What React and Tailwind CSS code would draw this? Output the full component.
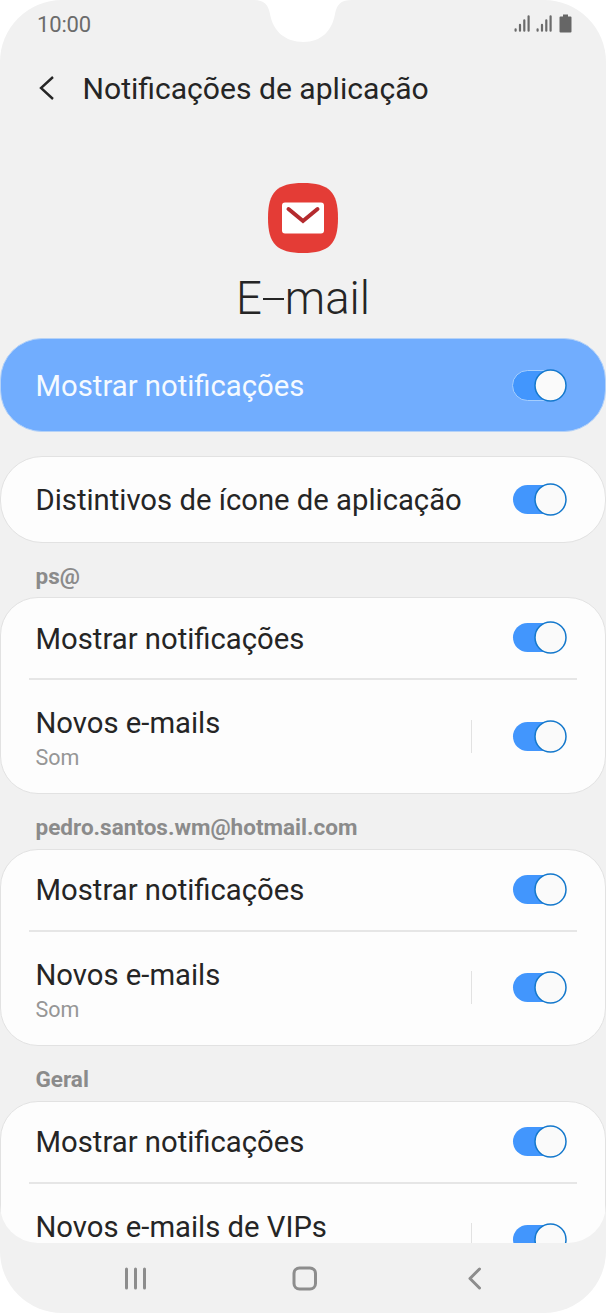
import clsx from "clsx";

const sections = [
  {
    title: "ps@",
    rows: [
      { label: "Mostrar notificações" },
      { label: "Novos e-mails", detail: "Som" },
    ],
  },
  {
    title: "pedro.santos.wm@hotmail.com",
    rows: [
      { label: "Mostrar notificações" },
      { label: "Novos e-mails", detail: "Som" },
    ],
  },
  {
    title: "Geral",
    rows: [
      { label: "Mostrar notificações" },
      { label: "Novos e-mails de VIPs" },
    ],
  },
];

function Toggle({ outlined }) {
  return (
    <div className="relative w-[54px] h-[33px] flex items-center shrink-0">
      <div
        className={clsx(
          "rounded-full bg-[#4296fd]",
          outlined
            ? "w-[52px] h-[31px] -ml-px border border-[#a5cefe]"
            : "w-[50px] h-[29px]"
        )}
      />
      <svg className="absolute right-0 top-0" width="33" height="33" viewBox="0 0 33 33">
        <circle cx="16.500" cy="16.500" r="15.500" fill="#fafafa" stroke="#1478cc" strokeWidth="1.500" />
      </svg>
    </div>
  );
}

function Signal() {
  return (
    <svg width="17" height="18" viewBox="0 0 17 18" stroke="#6b6b6b" strokeWidth="2.200" strokeLinecap="round">
      <path d="M1.6 14.300V15.700M6 9.800V15.700M10.3 5.300V15.700M14.6 1.300V15.700" />
    </svg>
  );
}

function StatusBar() {
  return (
    <div className="relative h-[48px] flex items-center justify-between pl-[37px] pr-[34px]">
      <span className="text-[22px] tracking-[-0.15px] text-[#6b6b6b]">10:00</span>
      <svg className="absolute left-[250px] top-0" width="106" height="43" viewBox="0 0 106 43" fill="#fff">
        <path d="M3 0C14 0 18 4 20 14C23 31 35 42 53.500 42C71 42 82 31 85 14C87 4 91 0 102 0Z" />
      </svg>
      <div className="flex items-center gap-[5px]">
        <Signal />
        <Signal />
        <svg className="ml-[1px] -mt-px" width="13" height="19" viewBox="0 0 13 19" fill="#666">
          <path d="M4 0.500h5v2h2.500q1 0 1 1v14q0 1 -1 1h-10q-1 0 -1-1v-14q0-1 1-1H4z" />
        </svg>
      </div>
    </div>
  );
}

function AppHeader() {
  return (
    <div className="h-[208px] flex flex-col items-center pt-[53px]">
      <svg width="70" height="70" viewBox="0 0 70 70">
        <path d="M35 0C61 0 70 9 70 35S61 70 35 70S0 61 0 35S9 0 35 0Z" fill="#e43c36" />
        <rect x="14" y="19.500" width="42" height="31" rx="3" fill="#fff" />
        <path d="M20.500 26L35 38L49.500 26" fill="none" stroke="#b42a2e" strokeWidth="4" strokeLinecap="round" />
      </svg>
      <h2 className="flex items-center mt-[15px] text-[45.500px] leading-[62px] font-light text-[#252525]">
        E<span className="w-[21px] h-[2px] mx-px bg-[#252525]" aria-hidden="true" />mail
      </h2>
    </div>
  );
}

function Row({ label, detail, last }) {
  return (
    <div
      className={clsx(
        "relative flex items-center justify-between pl-[34.5px] pr-[38px]",
        last ? "h-[114px]" : "h-[81px] pb-[2px]"
      )}
    >
      {/* a row without detail text still keeps the room for it */}
      <div className={last ? "h-[62px]" : "pt-[2px]"}>
        <p className="text-[29.250px] leading-[36px]">{label}</p>
        {detail && <p className="text-[21.500px] leading-[28px] mt-[3px] text-[#969696]">{detail}</p>}
      </div>
      <div className="flex items-center gap-[41px]">
        {last && <div className="w-px h-[33px] bg-[#e2e2e2]" />}
        <Toggle />
      </div>
      {!last && <div className="absolute left-[28px] right-[28px] -bottom-px h-[2px] bg-[#e6e6e6]" />}
    </div>
  );
}

function Section({ title, rows }) {
  return (
    <section>
      <h3 className="h-[54.7px] pl-[35.5px] pt-[19px] text-[22.500px] leading-[29px] font-bold text-[#8b8b8b]">
        {title}
      </h3>
      <div className="rounded-[38px] border border-[#e2e2e2] bg-[#fdfdfd] text-[#252525]">
        {rows.map((row, i) => (
          <Row key={row.label} {...row} last={i === rows.length - 1} />
        ))}
      </div>
    </section>
  );
}

function NavBar() {
  return (
    <div className="h-[70px] text-[#8d8d8d]">
      <svg width="606" height="70" viewBox="0 0 606 70" fill="none" stroke="currentColor" strokeWidth="3" strokeLinecap="round" strokeLinejoin="round">
        <path d="M126.500 26V45M135.500 26V45M144.500 26V45" />
        <rect x="294" y="25" width="21.500" height="21" rx="5.500" />
        <path d="M479.500 26L470 35.500L479.500 45" />
      </svg>
    </div>
  );
}

export default function App() {
  return (
    <div className="w-[606px] h-[1314px] bg-white overflow-hidden font-[Roboto,sans-serif]">
      <div className="h-[1313px] flex flex-col rounded-[62px] bg-[#f1f1f1] overflow-hidden">
        <StatusBar />
        <header className="h-[80px] mb-[2px] flex items-center pl-[37px] text-[#252525]">
          <svg width="18" height="26" viewBox="0 0 18 26" fill="none" stroke="currentColor" strokeWidth="2.400">
            <path d="M16 2L4 13L16 24" />
          </svg>
          <h1 className="ml-[27.5px] pt-[2px] text-[30.100px]">Notificações de aplicação</h1>
        </header>
        <AppHeader />
        <main className="h-[905px] rounded-b-[38px] overflow-hidden">
          <div className="h-[94px] flex items-center justify-between rounded-[42px] border border-[#b5d2f7] bg-[#71adfe] pl-[34.5px] pr-[38px] text-[29.250px] text-[#f5faff]">
            <p className="pt-[4px]">Mostrar notificações</p>
            <Toggle outlined />
          </div>
          <div className="h-[86.5px] mt-[24px] flex items-center justify-between rounded-[42px] border border-[#e2e2e2] bg-[#fdfdfd] pl-[34.5px] pr-[38px] text-[29.250px] text-[#252525]">
            <p className="pt-[4px]">Distintivos de ícone de aplicação</p>
            <Toggle />
          </div>
          {sections.map((section) => (
            <Section key={section.title} {...section} />
          ))}
        </main>
        <NavBar />
      </div>
    </div>
  );
}
